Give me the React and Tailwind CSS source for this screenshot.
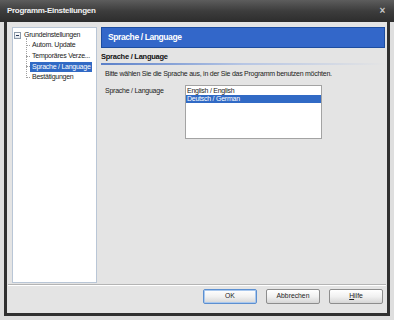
const treeChildren = [
  { label: "Autom. Update" },
  { label: "Temporäres Verze..." },
  { label: "Sprache / Language", selected: true },
  { label: "Bestätigungen" },
];

function DialogButton({ children, primary }) {
  return (
    <button
      className={
        "w-[54px] h-[15px] rounded-[2px] border bg-linear-to-b from-[#ffffff] via-[#f1f1f1] to-[#d6d6d6] text-[6.8px] leading-none text-[#222] flex items-center justify-center " +
        (primary ? "border-[#5c8fd0] shadow-[inset_0_0_0_1px_#a9c8ee]" : "border-[#8d8d8d]")
      }
    >
      {children}
    </button>
  );
}

export default function App() {
  return (
    <div className="w-[394px] h-[320px] bg-[#dedede] flex flex-col overflow-hidden font-['Liberation_Sans',Arial,sans-serif] text-[7px] tracking-[-0.25px] text-[#222]">
      {/* Titelleiste */}
      <div className="h-[22px] shrink-0 bg-linear-to-b from-[#5d5d5d] via-[#3d3d3d] to-[#2d2d2d] flex items-center justify-between pl-[7px] pr-[9px]">
        <span className="text-[#f2f2f2] font-bold text-[8px] tracking-[-0.3px]">Programm-Einstellungen</span>
        <span className="text-[#c8c8c8] font-bold text-[10px] leading-none">×</span>
      </div>

      {/* Fensterrahmen */}
      <div className="flex-1 mx-[4px] mb-[4px] border-x-[3px] border-b-[3px] border-[#303030] bg-[#e4e4e4] flex flex-col">
        <div className="flex gap-[4px] pt-[5px] pl-[5px] pr-[2px] h-[262px]">
          {/* Baum */}
          <div className="w-[85px] h-[256px] bg-white border border-[#b9c6d6] pt-[2px] whitespace-nowrap">
            <div className="flex items-center h-[10px] pl-[1px]">
              <span className="w-[7px] h-[7px] border border-[#8c99a8] bg-linear-to-b from-white to-[#dde3ea] flex items-center justify-center mr-[3px]">
                <span className="w-[3px] h-px bg-[#2a3a5a]" />
              </span>
              <span>Grundeinstellungen</span>
            </div>
            <div className="relative ml-[13px] pl-[4px]">
              <div className="absolute left-0 top-[-2px] h-[40px] border-l border-dotted border-[#a0a0a0]" />
              {treeChildren.map((item) => (
                <div key={item.label} className="relative h-[10.7px] flex items-center">
                  <div className="absolute left-[-4px] top-[5px] w-[4px] border-t border-dotted border-[#a0a0a0]" />
                  <span
                    className={
                      "w-[62px] pl-[2px] leading-[10px] " +
                      (item.selected ? "bg-[#316ac5] text-white" : "")
                    }
                  >
                    {item.label}
                  </span>
                </div>
              ))}
            </div>
          </div>

          {/* Inhalt */}
          <div className="flex-1 flex flex-col">
            <div className="h-[21px] border border-[#1d4da0] bg-[#3367c9] flex items-center pl-[6px]">
              <span className="text-white font-bold text-[8.5px] tracking-[-0.4px]">Sprache / Language</span>
            </div>
            <div className="mt-[4px] font-bold text-[7.5px] text-[#111] leading-[10px]">Sprache / Language</div>
            <div className="h-[2px] bg-linear-to-r from-[#5a7fc8] via-[#b7c6e4] to-[#e4e4e4] mt-[1px]" />
            <div className="mt-[4px] pl-[4px] leading-[10px]">
              Bitte wählen Sie die Sprache aus, in der Sie das Programm benutzen möchten.
            </div>
            <div className="flex mt-[6px] pl-[4px]">
              <div className="w-[80px] pt-[1px]">Sprache / Language</div>
              <div className="w-[137px] h-[54px] bg-white border border-[#a3a3a3] pt-px">
                <div className="h-[8px] leading-[8px] px-[1px]">English / English</div>
                <div className="h-[8px] leading-[8px] px-[1px] bg-[#316ac5] text-white">Deutsch / German</div>
              </div>
            </div>
          </div>
        </div>

        {/* Trennlinie */}
        <div className="mx-px h-[2px] border-t border-[#b4b4b4] border-b border-b-white" />

        {/* Schaltflächen */}
        <div className="flex justify-end gap-[9px] pr-[4px] pt-[3px] tracking-normal">
          <DialogButton primary>OK</DialogButton>
          <DialogButton>Abbrechen</DialogButton>
          <DialogButton>
            <span><span className="underline">H</span>ilfe</span>
          </DialogButton>
        </div>
      </div>
    </div>
  );
}
